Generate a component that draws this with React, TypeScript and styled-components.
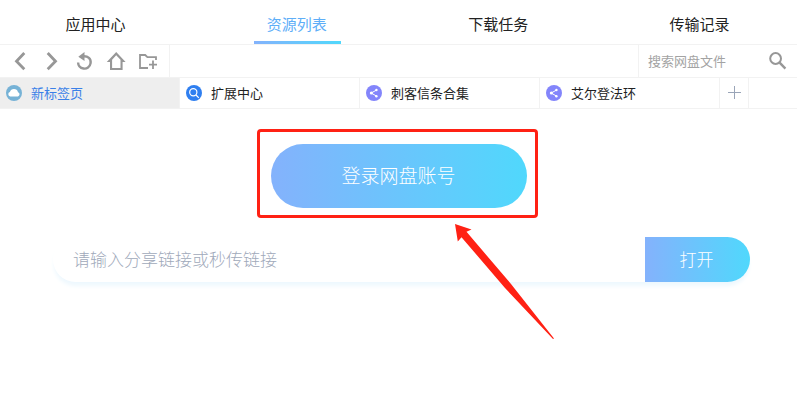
import React from "react";
import styled, { createGlobalStyle } from "styled-components";

const GlobalStyle = createGlobalStyle`
  *, *::before, *::after { box-sizing: border-box; }
  body {
    margin: 0;
    background: #fff;
    color: #222;
    font-family: "Noto Sans CJK SC", "Microsoft YaHei", sans-serif;
  }
  button, input { font-family: inherit; }
`;

const brandGradient = "linear-gradient(90deg, #84b2fc, #50d8fc)";
const line = "1px solid #f2f2f2";

const Page = styled.div`
  min-height: 100vh;
  background: #fff;
`;

const MainNav = styled.nav`
  display: flex;
  justify-content: space-between;
  height: 45px;
  padding: 0 53px;
  border-bottom: ${line};
`;

const NavLink = styled.a<{ $active?: boolean }>`
  width: 87px;
  padding: 3px 2px 0 0;
  border-bottom: 3px solid transparent;
  border-image: ${(p) => (p.$active ? `${brandGradient} 1` : "none")};
  border-image-width: 0 0 3px 0;
  color: ${(p) => (p.$active ? "#5eaef8" : "#222")};
  font-size: 15px;
  line-height: 42px;
  text-align: center;
  text-decoration: none;
`;

const Toolbar = styled.div`
  display: flex;
  justify-content: space-between;
  height: 33px;
  border-bottom: ${line};
`;

const ToolGroup = styled.div`
  display: flex;
  width: 170px;
  padding-left: 4px;
  border-right: ${line};
`;

const IconButton = styled.button`
  display: flex;
  align-items: center;
  justify-content: center;
  width: 32px;
  padding: 0;
  border: 0;
  background: none;
  color: #979797;
`;

const FileSearch = styled.form`
  display: flex;
  width: 159px;
  padding: 0 3px 0 9px;
  border-left: ${line};
`;

const FileInput = styled.input`
  flex: 1;
  min-width: 0;
  padding: 0 0 2px;
  border: 0;
  outline: 0;
  background: none;
  font-size: 13px;
  &::placeholder { color: #a3a3a3; opacity: 1; }
`;

const TabBar = styled.div`
  display: flex;
  height: 31px;
  border-bottom: ${line};
`;

const Tab = styled.button<{ $active?: boolean }>`
  display: flex;
  align-items: center;
  gap: 9px;
  width: 180px;
  padding: 0 6px;
  border: 0;
  border-right: ${line};
  background: ${(p) => (p.$active ? "#eee" : "#fff")};
  color: ${(p) => (p.$active ? "#3a80e8" : "#222")};
  font-size: 13px;
  line-height: 30px;
`;

const AddTab = styled(IconButton)`
  width: 29px;
  border-right: ${line};
  color: #9aa5b8;
`;

const Content = styled.main`
  display: flex;
  flex-direction: column;
  align-items: center;
  gap: 29px;
  padding: 35px 0 60px;
`;

const LoginArea = styled.div`
  position: relative;
`;

const LoginButton = styled.button`
  display: block;
  width: 256px;
  height: 64px;
  padding: 0 0 3px;
  border: 0;
  border-radius: 32px;
  background: ${brandGradient};
  color: #fff;
  font-size: 19px;
  font-weight: 300;
`;

const Highlight = styled.div`
  position: absolute;
  inset: -15px -11px -10px -14px;
  border: 3px solid #ff2114;
  border-radius: 4px;
  pointer-events: none;
`;

const Pointer = styled.svg`
  position: absolute;
  left: 184px;
  top: 80px;
  z-index: 1;
  pointer-events: none;
`;

const LinkForm = styled.form`
  display: flex;
  align-self: stretch;
  height: 45px;
  margin: 0 47px 0 53px;
  border-radius: 23px;
  background: #fff;
  box-shadow: 0 5px 4px -1px #eef8fe;
`;

const LinkInput = styled.input`
  flex: 1;
  min-width: 0;
  padding: 0 20px 2px;
  border: 0;
  outline: 0;
  background: none;
  font-size: 17px;
  font-weight: 300;
  &::placeholder { color: #a0a9ba; opacity: 1; }
`;

const OpenButton = styled.button`
  width: 105px;
  padding: 0 2px 2px 0;
  border: 0;
  border-radius: 0 23px 23px 0;
  background: ${brandGradient};
  color: #fff;
  font-size: 17px;
  font-weight: 300;
`;

const tools = [
  {
    label: "后退",
    icon: <path d="M14.3 2 6.5 10.3l7.8 8" strokeWidth="2.8" />,
  },
  {
    label: "前进",
    icon: <path d="M5.7 2l7.8 8.3-7.8 8" strokeWidth="2.8" />,
  },
  {
    label: "刷新",
    icon: (
      <>
        <path d="M9 5.3c5-.5 8.2 2.7 7.6 6.8-.7 4-3.8 6-7.1 5.4-3.2-.4-5.3-2.9-5.4-6" strokeWidth="2.4" />
        <path d="M4.3 5.7 10.5 1v9z" fill="currentColor" stroke="none" />
      </>
    ),
  },
  {
    label: "主页",
    icon: (
      <path
        d="M10.2 1 .8 11h3.2v8h12.6v-8h3zm0 3.2 4.3 4.6v8.1H6.1V8.8z"
        fill="currentColor"
        fillRule="evenodd"
        stroke="none"
      />
    ),
  },
  {
    label: "新建文件夹",
    icon: (
      <>
        <path d="M10 17H2V4h5.2l2.2 2.2H18V9" strokeWidth="1.8" />
        <path d="M15 9.5v8.5M11 13.7h8" strokeWidth="1.8" />
      </>
    ),
  },
];

function CloudIcon() {
  return (
    <svg width="16" height="16" viewBox="0 0 16 16" aria-hidden="true">
      <circle cx="8" cy="8" r="8" fill="#76b2d6" />
      <path d="M4.2 11.4a2.2 2.2 0 0 1-.3-4.3A4.2 4.2 0 0 1 12 7.2a2.2 2.2 0 0 1 0 4.2z" fill="#fff" />
    </svg>
  );
}

function ExtensionIcon() {
  return (
    <svg width="16" height="16" viewBox="0 0 16 16" aria-hidden="true">
      <circle cx="8" cy="8" r="8" fill="#2f7ff0" />
      <circle cx="7.3" cy="7.2" r="3.6" fill="none" stroke="#fff" strokeWidth="1.2" />
      <path d="m10 10 2.8 2.8" stroke="#fff" strokeWidth="1.2" />
    </svg>
  );
}

function ShareIcon() {
  return (
    <svg width="16" height="16" viewBox="0 0 16 16" aria-hidden="true">
      <circle cx="8" cy="8" r="8" fill="#8385fb" />
      <path d="M10.6 5 5.2 8l5.4 3.2" fill="none" stroke="#fff" strokeWidth="1" />
      <g fill="#fff">
        <circle cx="10.4" cy="5" r="1.2" />
        <circle cx="5.3" cy="8.1" r="1.5" />
        <circle cx="10.4" cy="11.3" r="1.2" />
      </g>
    </svg>
  );
}

const navItems = ["应用中心", "资源列表", "下载任务", "传输记录"];
const tabs = [
  { label: "新标签页", icon: <CloudIcon /> },
  { label: "扩展中心", icon: <ExtensionIcon /> },
  { label: "刺客信条合集", icon: <ShareIcon /> },
  { label: "艾尔登法环", icon: <ShareIcon /> },
];

export default function App() {
  return (
    <Page>
      <GlobalStyle />
      <MainNav>
        {navItems.map((item) => (
          <NavLink key={item} href="#" $active={item === "资源列表"}>
            {item}
          </NavLink>
        ))}
      </MainNav>
      <Toolbar>
        <ToolGroup>
          {tools.map((tool) => (
            <IconButton key={tool.label} type="button" aria-label={tool.label}>
              <svg width="20" height="20" viewBox="0 0 20 20" fill="none" stroke="currentColor">
                {tool.icon}
              </svg>
            </IconButton>
          ))}
        </ToolGroup>
        <FileSearch>
          <FileInput type="text" aria-label="搜索网盘文件" placeholder="搜索网盘文件" />
          <IconButton type="button" aria-label="搜索">
            <svg width="20" height="20" viewBox="0 0 20 20" fill="none" stroke="currentColor">
              <circle cx="7.6" cy="7.5" r="5.4" strokeWidth="2" />
              <path d="m11.4 11.4 6 6.2" strokeWidth="2.4" />
            </svg>
          </IconButton>
        </FileSearch>
      </Toolbar>
      <TabBar role="tablist">
        {tabs.map((tab, index) => (
          <Tab key={tab.label} type="button" role="tab" aria-selected={index === 0} $active={index === 0}>
            {tab.icon}
            {tab.label}
          </Tab>
        ))}
        <AddTab type="button" aria-label="添加标签页">
          <svg width="14" height="14" viewBox="0 0 14 14" fill="none" stroke="currentColor">
            <path d="M7.5 0v13M1 6.5h13" />
          </svg>
        </AddTab>
      </TabBar>
      <Content>
        <LoginArea>
          <LoginButton type="button">登录网盘账号</LoginButton>
          <Highlight />
          <Pointer width="100" height="116" viewBox="0 0 100 116" aria-hidden="true">
            <path d="M0 0 16.5 5.5 11.5 7.8 56 60 99 114.5 98 115 50 64 6.5 13.2 2.8 17.5z" fill="#ff2114" />
          </Pointer>
        </LoginArea>
        <LinkForm>
          <LinkInput type="text" aria-label="分享链接或秒传链接" placeholder="请输入分享链接或秒传链接" />
          <OpenButton type="button">打开</OpenButton>
        </LinkForm>
      </Content>
    </Page>
  );
}
